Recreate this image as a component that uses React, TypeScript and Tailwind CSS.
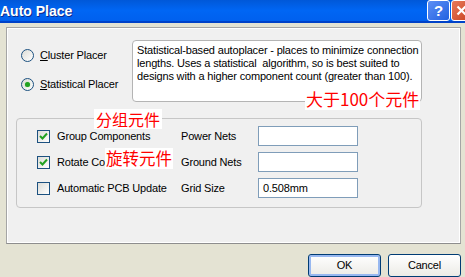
import React from "react";

const sans = "font-['Liberation_Sans',Arial,sans-serif]";
const cjk = "font-['Noto_Sans_CJK_SC','Noto_Sans',sans-serif]";
const small = "text-[11px] tracking-[-0.17px] text-black";

function Radio({ checked, label, u }: { checked?: boolean; label: string; u: string }) {
  return (
    <div className="flex items-center gap-[6px] h-[13px]">
      <span className="w-[13px] h-[13px] rounded-full border border-[#1C5180] bg-gradient-to-br from-[#DCDCD6] to-[#FFFFFF] flex items-center justify-center">
        {checked && <span className="w-[5px] h-[5px] rounded-full bg-[#21A121] shadow-[0_0_1px_#6EC86E]" />}
      </span>
      <span className={`${small} leading-[13px]`}>
        <span className="underline">{u}</span>
        {label}
      </span>
    </div>
  );
}

function Check({ checked }: { checked?: boolean }) {
  return (
    <span className="w-[13px] h-[13px] border border-[#1C5180] bg-gradient-to-br from-[#DCDCD7] to-[#FFFFFF] flex items-center justify-center">
      {checked && (
        <svg width="9" height="9" viewBox="0 0 9 9">
          <path d="M1 4 L3.5 6.5 L8 1.5" stroke="#21A121" strokeWidth="2" fill="none" />
        </svg>
      )}
    </span>
  );
}

const rows = [
  { label: "Group Components", checked: true, field: "Power Nets", value: "" },
  { label: "Rotate Components", checked: true, field: "Ground Nets", value: "" },
  { label: "Automatic PCB Update", checked: false, field: "Grid Size", value: "0.508mm" },
];

export default function App() {
  return (
    <div className={`relative w-[465px] h-[277px] overflow-hidden bg-[#E4E3D3] flex flex-col ${sans}`}>
      {/* title bar */}
      <div className="h-[23px] flex items-center justify-between bg-gradient-to-b from-[#0058D8] via-[#0066F4] to-[#0060EE] border-b-[2px] border-[#0042C8]">
        <span className="text-white font-bold text-[14px] leading-none [text-shadow:1px_1px_0_#0A2A8C]">Auto Place</span>
        <div className="flex items-center gap-[1px] -mr-[7px] pb-[1px]">
          <span className="w-[23px] h-[21px] rounded-[3px] border border-white bg-gradient-to-br from-[#5B8FF5] to-[#2260E0] flex items-center justify-center text-white font-bold text-[15px] leading-none">?</span>
          <span className="w-[21px] h-[21px] rounded-[3px] border border-white bg-gradient-to-br from-[#E8795A] to-[#C8401E] flex items-center justify-center">
            <svg width="11" height="11" viewBox="0 0 11 11">
              <path d="M1.5 1.5 L9.5 9.5 M9.5 1.5 L1.5 9.5" stroke="white" strokeWidth="2.2" />
            </svg>
          </span>
        </div>
      </div>

      {/* body */}
      <div className="pl-[6px] pt-[4px]">
        <div className="w-[455px] h-[217px] bg-[#F0F0F0] border border-[#A5A5A5] border-b-[#8E8E8E] shadow-[inset_0_0_0_1px_#FFFFFF]">
          <div className="flex pl-[14px] pt-[12px]">
            <div className="w-[111px] pt-[9px] flex flex-col gap-[16px]">
              <Radio u="C" label="luster Placer" />
              <Radio checked u="S" label="tatistical Placer" />
            </div>
            <div className={`w-[290px] h-[62px] bg-white border border-[#B4B4B4] rounded-[4px] px-[4px] pt-[3px] leading-[13px] whitespace-nowrap ${small}`}>
              <div>Statistical-based autoplacer - places to minimize connection</div>
              <div>lengths. Uses a statistical&nbsp; algorithm, so is best suited to</div>
              <div>designs with a higher component count (greater than 100).</div>
            </div>
          </div>

          <div className="ml-[9px] mt-[16px] w-[406px] h-[90px] border border-[#C6C6C6] rounded-[4px] pt-[7px] flex flex-col gap-[6px]">
            {rows.map((r) => (
              <div key={r.field} className="flex items-center h-[20px]">
                <div className="w-[164px] pl-[20px] flex items-center gap-[7px]">
                  <Check checked={r.checked} />
                  <span className={`${small} whitespace-nowrap`}>{r.label}</span>
                </div>
                <span className={`w-[77px] ${small}`}>{r.field}</span>
                <div className={`w-[100px] h-[20px] bg-white border border-[#7F9DB9] px-[4px] leading-[18px] ${small}`}>{r.value}</div>
              </div>
            ))}
          </div>
        </div>
      </div>

      {/* buttons */}
      <div className="flex justify-end gap-[7px] pr-[4px] mt-[10px]">
        <button className={`w-[73px] h-[23px] rounded-[3px] border border-[#003C74] bg-gradient-to-b from-[#FFFFFF] to-[#ECEBE6] shadow-[inset_0_0_0_2px_#98B8F0] ${small}`}>
          OK
        </button>
        <button className={`w-[73px] h-[23px] rounded-[3px] border border-[#003C74] bg-gradient-to-b from-[#FFFFFF] to-[#ECEBE6] ${small}`}>
          Cancel
        </button>
      </div>

      {/* red annotations */}
      <span className={`absolute left-[305px] top-[87px] h-[23px] px-[1px] bg-white text-[#FF0000] text-[17px] leading-[23px] ${cjk}`}>大于100个元件</span>
      <span className={`absolute left-[94px] top-[109px] h-[20px] px-[2px] bg-white text-[#FF0000] text-[16px] leading-[20px] ${cjk}`}>分组元件</span>
      <span className={`absolute left-[105px] top-[148px] h-[21px] px-[1px] bg-white text-[#FF0000] text-[16.5px] leading-[21px] ${cjk}`}>旋转元件</span>
    </div>
  );
}
